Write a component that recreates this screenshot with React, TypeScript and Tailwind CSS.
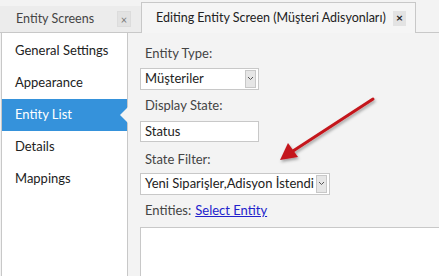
import React from "react";

export default function App() {
  const font = "font-['Lato','Noto_Sans',sans-serif]";
  const chevron = (
    <span className="flex h-[18px] w-[11px] items-center justify-center border border-[#c8c8c8] bg-[#e6e6e6]">
      <svg width="7" height="5" viewBox="0 0 7 5"><path d="M1 1 L3.5 3.5 L6 1" stroke="#555" strokeWidth="1" fill="none" /></svg>
    </span>
  );
  return (
    <div className={`relative w-[439px] h-[276px] overflow-hidden bg-[#f3f3f3] text-[13px] text-[#333] whitespace-nowrap ${font}`}>
      {/* Tab row */}
      <div className="flex h-[33px] items-end">
        <div className="flex h-[27px] w-[136px] shrink-0 items-center justify-between border-b border-[#c8c8c8] bg-[#ececec] pl-[16px] pr-[5px] text-[#444]">
          <span className="text-[12.5px] leading-none">Entity Screens</span>
          <span className="flex h-[16px] w-[14px] items-center justify-center border border-[#dcdcdc] bg-[#e2e2e2] text-[11px] leading-none text-[#777]">×</span>
        </div>
        <div className="h-[27px] w-[5px] shrink-0 border-b border-[#c8c8c8] bg-[#ececec]" />
        <div className="flex h-[31px] w-[275px] shrink-0 items-center justify-between border border-b-0 border-[#c8c8c8] bg-[#f5f5f5] pl-[14px] pr-[9px] text-[#222]">
          <span className="text-[12.5px] leading-none">Editing Entity Screen (Müşteri Adisyonları)</span>
          <span className="flex h-[15px] w-[13px] items-center justify-center bg-[#e3e3e3] text-[12px] font-bold leading-none text-[#222]">×</span>
        </div>
        <div className="flex-1 border-b border-[#c8c8c8]" />
      </div>

      {/* Body */}
      <div className="flex h-[243px]">
        <div className="ml-[1px] w-[127px] shrink-0 border-l border-r border-[#c8c8c8] bg-white pt-[2px]">
          {["General Settings", "Appearance", "Entity List", "Details", "Mappings"].map((t) => {
            const active = t === "Entity List";
            return (
              <div
                key={t}
                className={`relative flex h-[32px] items-center pl-[13px] ${active ? "bg-[#3592db] text-white" : "text-[#222]"}`}
              >
                {t}
                {active && (
                  <span className="absolute right-[-1px] top-[8px] h-0 w-0 border-y-[8px] border-r-[8px] border-y-transparent border-r-[#f3f3f3]" />
                )}
              </div>
            );
          })}
        </div>

        <div className="flex min-w-0 flex-1 flex-col pl-[12px] pt-[11px]">
          <div className="pl-[5px] leading-[18px] text-[#444]">Entity Type:</div>
          <div className="mt-[6px] flex h-[24px] w-[119px] items-center justify-between border border-[#c8c8c8] bg-white pl-[4px] pr-[2px]">
            <span className="text-[#222]">Müşteriler</span>
            {chevron}
          </div>
          <div className="mt-[6px] pl-[5px] leading-[18px] text-[#444]">Display State:</div>
          <div className="mt-[7px] flex h-[22px] w-[119px] items-center border border-[#c8c8c8] bg-white pl-[4px]">
            <span className="text-[#222]">Status</span>
          </div>
          <div className="mt-[8px] pl-[5px] leading-[18px] text-[#444]">State Filter:</div>
          <div className="mt-[5px] flex h-[24px] w-[190px] items-center justify-between border border-[#c8c8c8] bg-white pl-[4px] pr-[2px]">
            <span className="text-[#222]">Yeni Siparişler,Adisyon İstendi</span>
            {chevron}
          </div>
          <div className="mt-[6px] flex items-center pl-[5px] leading-[18px]">
            <span className="text-[#444]">Entities:</span>
            <span className="ml-[4px] text-[#2222cc] underline">Select Entity</span>
          </div>
          <div className="mt-[8px] h-[60px] w-[310px] shrink-0 border border-[#c8c8c8] bg-white" />
        </div>
      </div>

      {/* Red arrow annotation */}
      <svg className="absolute left-0 top-0" width="439" height="276" viewBox="0 0 439 276">
        <defs>
          <filter id="sh" x="-20%" y="-20%" width="140%" height="140%">
            <feDropShadow dx="1" dy="2" stdDeviation="1.5" floodColor="#000" floodOpacity="0.35" />
          </filter>
        </defs>
        <g filter="url(#sh)">
          <line x1="373" y1="99" x2="293" y2="151" stroke="#c4161c" strokeWidth="3" strokeLinecap="round" />
          <polygon points="280,160 288,143 298,157" fill="#c4161c" />
        </g>
      </svg>
    </div>
  );
}
